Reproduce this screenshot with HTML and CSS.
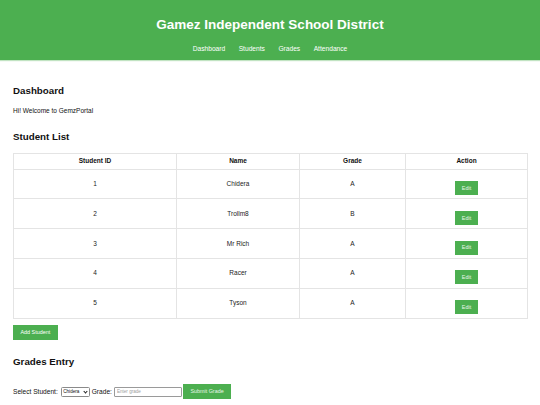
FILE: index.html
```html
<!DOCTYPE html>
<html lang="en">
<head>
<meta charset="utf-8">
<title>Gamez Independent School District</title>
<link rel="stylesheet" href="styles.css">
</head>
<body>
<header class="site-header">
  <h1 class="site-title">Gamez Independent School District</h1>
  <nav class="site-nav">
    <a href="#dashboard">Dashboard</a>
    <a href="#students">Students</a>
    <a href="#grades">Grades</a>
    <a href="#attendance">Attendance</a>
  </nav>
</header>
<main class="content">
  <section class="section section-dashboard" id="dashboard">
    <h2 class="section-title">Dashboard</h2>
    <p class="welcome">Hi! Welcome to GemzPortal</p>
  </section>
  <section class="section section-students" id="students">
    <h2 class="section-title">Student List</h2>
    <table class="student-table">
      <colgroup>
        <col class="col-id">
        <col class="col-name">
        <col class="col-grade">
        <col class="col-action">
      </colgroup>
      <thead>
        <tr><th>Student ID</th><th>Name</th><th>Grade</th><th>Action</th></tr>
      </thead>
      <tbody>
        <tr><td>1</td><td>Chidera</td><td>A</td><td><button class="btn btn-edit">Edit</button></td></tr>
        <tr><td>2</td><td>Trollm8</td><td>B</td><td><button class="btn btn-edit">Edit</button></td></tr>
        <tr><td>3</td><td>Mr Rich</td><td>A</td><td><button class="btn btn-edit">Edit</button></td></tr>
        <tr><td>4</td><td>Racer</td><td>A</td><td><button class="btn btn-edit">Edit</button></td></tr>
        <tr><td>5</td><td>Tyson</td><td>A</td><td><button class="btn btn-edit">Edit</button></td></tr>
      </tbody>
    </table>
    <button class="btn btn-add">Add Student</button>
  </section>
  <section class="section section-grades" id="grades">
    <h2 class="section-title">Grades Entry</h2>
    <form class="grade-form">
      <label class="form-label" for="student">Select Student:</label>
      <span class="select-wrap">
        <select class="form-select" id="student">
          <option>Chidera</option>
          <option>Trollm8</option>
          <option>Mr Rich</option>
          <option>Racer</option>
          <option>Tyson</option>
        </select>
      </span>
      <label class="form-label" for="grade">Grade:</label>
      <input class="form-input" id="grade" type="text" placeholder="Enter grade">
      <button class="btn btn-submit" type="button">Submit Grade</button>
    </form>
  </section>
</main>
</body>
</html>
```

FILE: styles.css
```css
* { box-sizing: border-box; }

html, body {
  margin: 0;
  padding: 0;
  background: #ffffff;
}

body {
  font-family: "Liberation Sans", Arial, sans-serif;
  font-size: 6.5px;
  color: #111111;
}

.site-header {
  background: #4caf50;
  height: 60px;
  display: flex;
  flex-direction: column;
  align-items: center;
  color: #ffffff;
  box-shadow: 0 1px 1px rgba(76, 175, 80, 0.35);
}

.site-title {
  margin: 17px 0 0;
  font-size: 13.5px;
  line-height: 16px;
  font-weight: bold;
}

.site-nav {
  margin-top: 11.5px;
  display: flex;
  gap: 13.5px;
  line-height: 8px;
}

.site-nav a {
  color: #ffffff;
  text-decoration: none;
  font-size: 6.65px;
}

.content {
  padding: 0 13px;
}

.section-title {
  margin: 0;
  font-size: 9.75px;
  line-height: 12px;
  font-weight: bold;
  color: #111111;
}

.section-dashboard { padding-top: 25px; }

.welcome {
  margin: 10px 0 0;
  line-height: 8px;
}

.section-students { padding-top: 15.6px; }

.student-table {
  margin-top: 10px;
  width: 100%;
  border-collapse: collapse;
  table-layout: fixed;
  border: 1px solid #e4e4e4;
}

.col-id { width: 163px; }
.col-name { width: 123px; }
.col-grade { width: 106px; }
.col-action { width: 122px; }

.student-table th,
.student-table td {
  border: 1px solid #e4e4e4;
  text-align: center;
  vertical-align: middle;
  padding: 0 4px;
  line-height: 8px;
}

.student-table th {
  height: 16px;
  font-weight: bold;
  color: #111111;
}

.student-table td {
  height: 29.8px;
  color: #222222;
}

.btn {
  background: #4caf50;
  color: #ffffff;
  border: none;
  border-radius: 0;
  font-family: "Liberation Sans", Arial, sans-serif;
  font-size: 5.4px;
  line-height: 6.5px;
  cursor: pointer;
}

.btn-edit {
  margin-top: 8px;
  padding: 3.75px 6.5px;
  color: #e8f5e9;
}

.btn-add {
  margin-top: 6.5px;
  padding: 4.25px 7.5px;
  display: block;
}

.section-grades { padding-top: 16.3px; }

.grade-form {
  margin-top: 15.7px;
  display: flex;
  align-items: center;
  height: 15px;
}

.form-label {
  font-size: 6.6px;
  line-height: 8px;
  color: #111111;
}

.select-wrap {
  position: relative;
  display: inline-flex;
  margin: 0 2px 0 3px;
}

.form-select {
  appearance: none;
  -webkit-appearance: none;
  width: 29px;
  height: 10px;
  padding: 0 6px 0 1.5px;
  font-family: "Liberation Sans", Arial, sans-serif;
  font-size: 4.6px;
  line-height: 8px;
  border: 1px solid #8a8a8a;
  border-radius: 1.5px;
  background: #ffffff;
  color: #111111;
}

.select-wrap::after {
  content: "";
  position: absolute;
  right: 3px;
  top: 3px;
  width: 2px;
  height: 2px;
  border-right: 1px solid #222222;
  border-bottom: 1px solid #222222;
  transform: rotate(45deg);
  pointer-events: none;
}

.form-input {
  margin: 0 1px 0 2px;
  width: 68px;
  height: 10px;
  padding: 0 2px;
  font-family: "Liberation Sans", Arial, sans-serif;
  font-size: 4.6px;
  border: 1px solid #9a9a9a;
  border-radius: 1px;
}

.form-input::placeholder { color: #a0a0a0; }

.btn-submit {
  height: 15px;
  padding: 0 7.5px;
  color: #e8f5e9;
}
```
